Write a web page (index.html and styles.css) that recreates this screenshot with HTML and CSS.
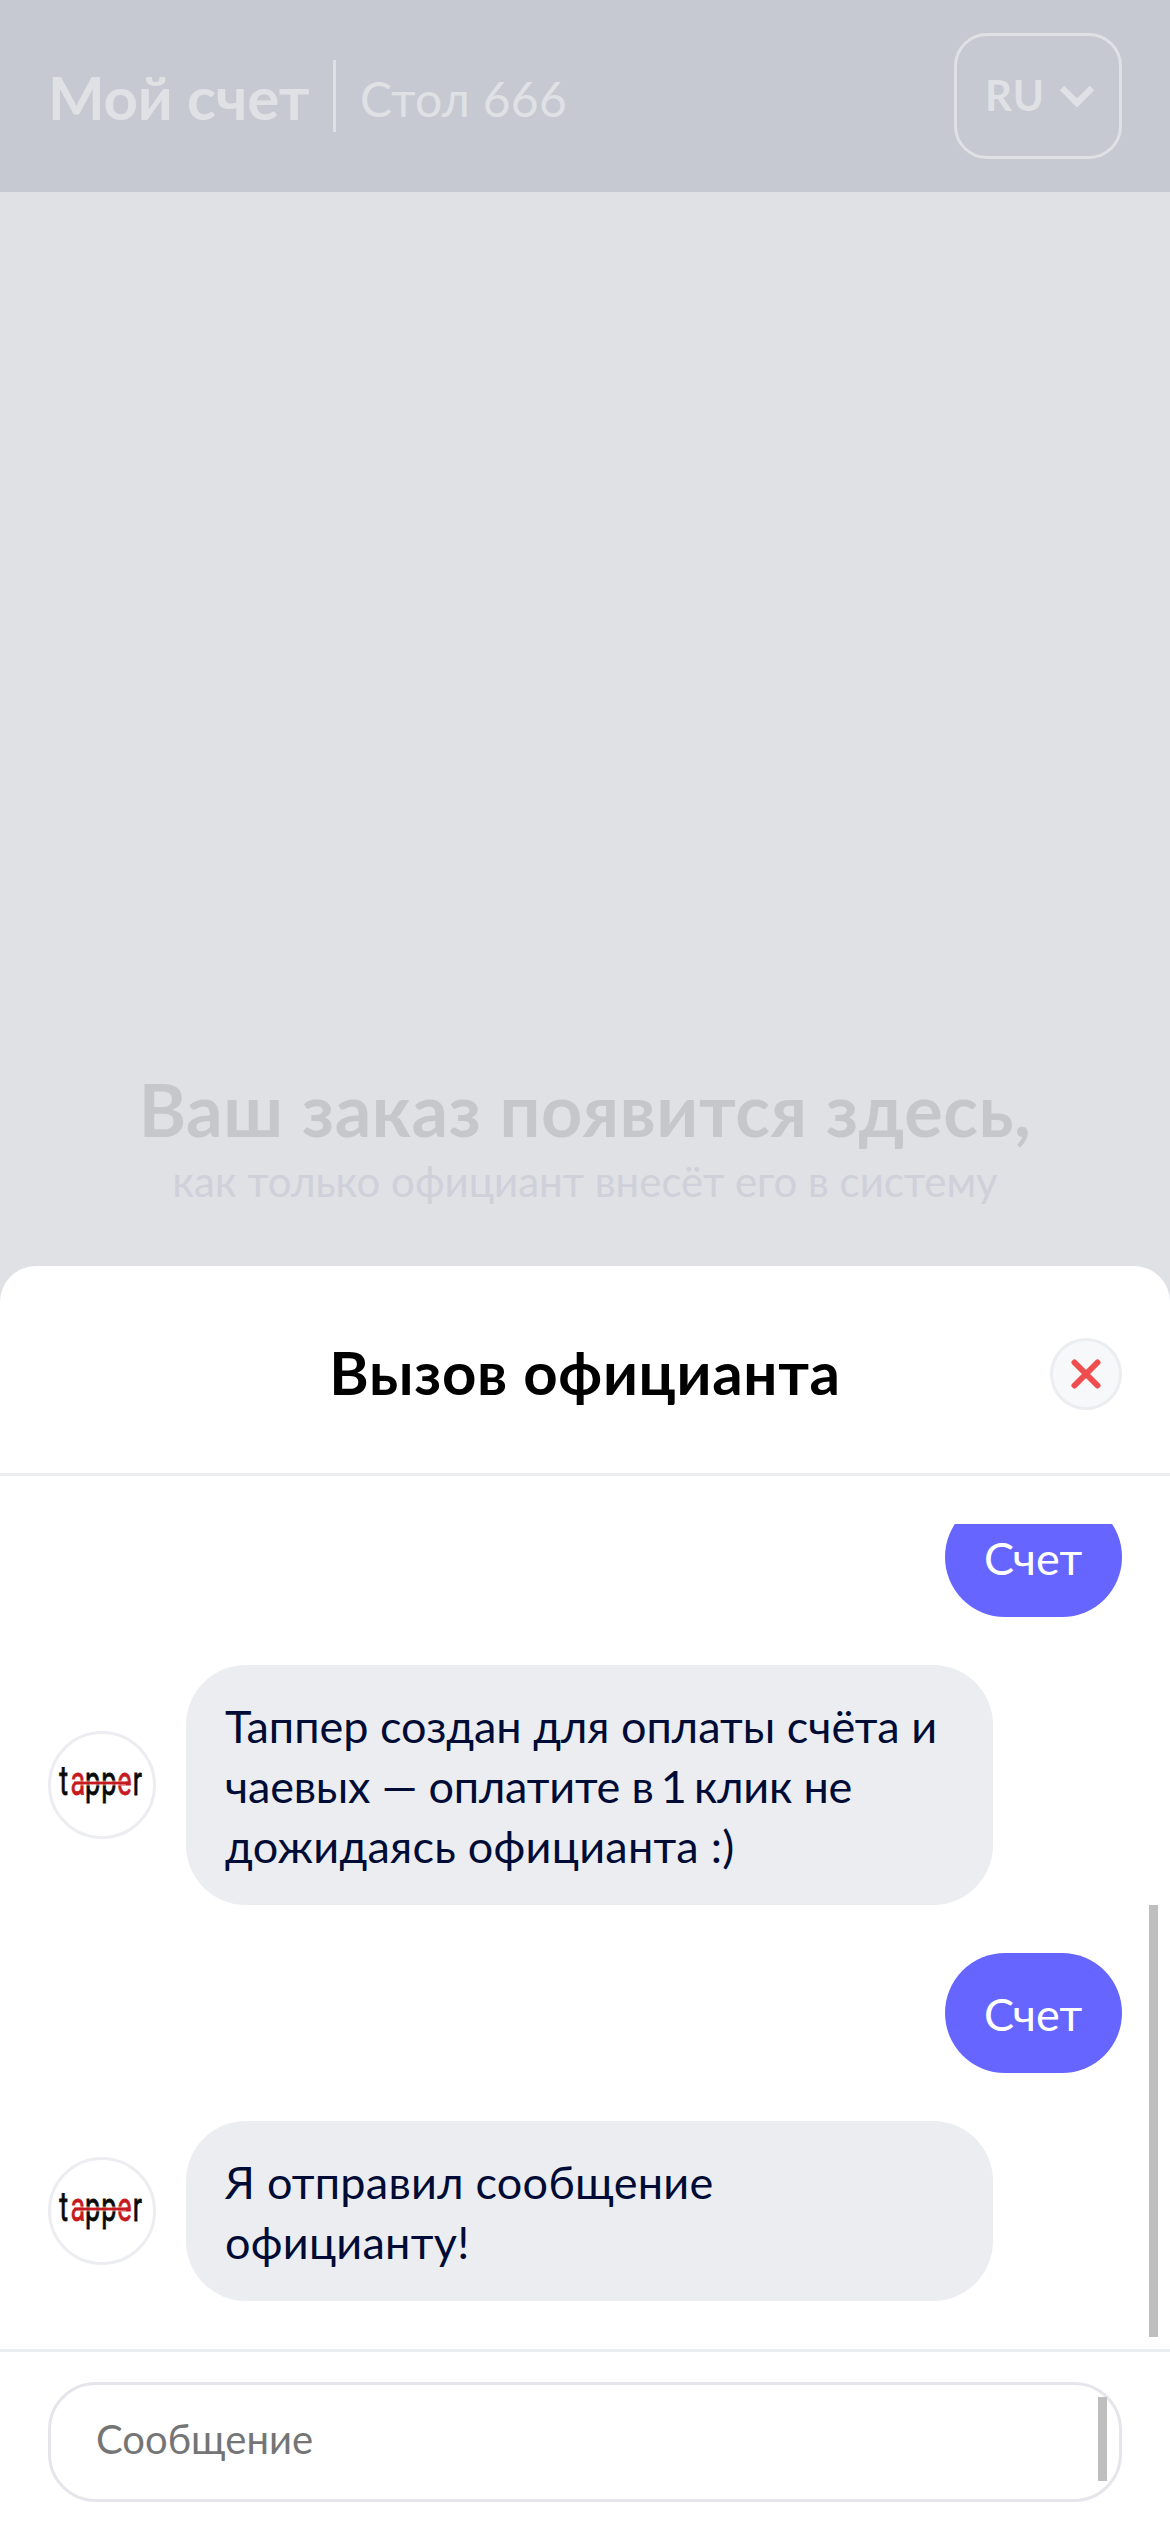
FILE: index.html
```
<!DOCTYPE html>
<html lang="ru">
<head>
<meta charset="utf-8">
<title>Мой счет</title>
<link rel="stylesheet" href="styles.css">
</head>
<body>
<svg class="defs" aria-hidden="true">
  <defs>
    <clipPath id="logo-clip"><rect x="0" y="0" width="102" height="66"/></clipPath>
    <symbol id="tapper" viewBox="0 0 102 102">
      <g clip-path="url(#logo-clip)">
        <text class="logo-text" transform="scale(.66 1)" y="61.5"><tspan x="12.5">t</tspan><tspan class="logo-red" x="29.5">a</tspan><tspan x="51.5">p</tspan><tspan x="76">p</tspan><tspan class="logo-red" x="100.5">e</tspan><tspan x="124">r</tspan></text>
      </g>
      <rect class="logo-halo" x="25" y="46.5" width="50" height="5"/>
      <rect class="logo-line" x="23" y="47.6" width="56" height="2.8"/>
    </symbol>
  </defs>
</svg>
<div class="app">
  <header class="topbar">
    <h1 class="topbar-title">Мой счет</h1>
    <span class="topbar-divider"></span>
    <span class="table-name">Стол 666</span>
    <button class="lang" type="button"><span class="lang-name">RU</span><svg class="chevron" viewBox="0 0 34 22"><path d="M2 3 17 18 32 3"/></svg></button>
  </header>
  <main class="empty">
    <p class="empty-title">Ваш заказ появится здесь,</p>
    <p class="empty-text">как только официант внесёт его в систему</p>
  </main>
  <section class="sheet">
    <header class="sheet-head">
      <h2 class="sheet-title">Вызов официанта</h2>
      <button class="close" type="button"><svg class="close-icon" viewBox="0 0 30 30"><path d="M3.5 3.5 26.5 26.5M26.5 3.5 3.5 26.5"/></svg></button>
    </header>
    <div class="chat">
      <div class="messages">
        <div class="bubble bubble-user">Счет</div>
        <div class="reply">
          <div class="avatar"><svg class="logo"><use href="#tapper"/></svg></div>
          <div class="bubble bubble-bot">Таппер создан для оплаты счёта и<br><span class="snug">чаевых — оплатите в <span class="digit">1</span> клик не</span><br><span class="loose">дожидаясь официанта :)</span></div>
        </div>
        <div class="bubble bubble-user">Счет</div>
        <div class="reply">
          <div class="avatar"><svg class="logo"><use href="#tapper"/></svg></div>
          <div class="bubble bubble-bot"><span class="loose">Я отправил сообщение<br>официанту!</span></div>
        </div>
      </div>
      <span class="thumb thumb-chat"></span>
    </div>
    <footer class="composer">
      <div class="field">
        <input class="field-input" type="text" placeholder="Сообщение">
        <span class="thumb thumb-field"></span>
      </div>
    </footer>
  </section>
</div>
</body>
</html>
```
FILE: styles.css
```
* { box-sizing: border-box; }

body {
  margin: 0;
  background: #dfe1e5;
  font-family: Lato, "Noto Sans", sans-serif;
}

h1, h2, p { margin: 0; }

button { font: inherit; padding: 0; background: none; }

.defs { display: none; }

.app {
  display: flex;
  flex-direction: column;
  height: 2532px;
  overflow: hidden;
}

/* Top bar */
.topbar {
  display: flex;
  align-items: center;
  flex: none;
  height: 192px;
  padding: 0 48px;
  background: #c6c9d2;
  color: #dfe1e5;
}

.topbar-title {
  width: 285px;
  padding-top: 2px;
  font-size: 60px;
  line-height: 72px;
  font-weight: 700;
  letter-spacing: -.2px;
  white-space: nowrap;
}

.topbar-divider {
  width: 3px;
  height: 72px;
  background: #dfe1e5;
}

.table-name {
  margin-left: 24px;
  padding-top: 5px;
  font-size: 48px;
  line-height: 60px;
  letter-spacing: .3px;
}

.lang {
  display: flex;
  align-items: center;
  width: 168px;
  height: 126px;
  margin-left: auto;
  padding: 0 25px 0 28px;
  border: 3px solid #dfe1e5;
  border-radius: 33px;
  color: #dfe1e5;
}

.lang-name {
  margin-top: -3px;
  font-size: 42px;
  line-height: 50px;
  font-weight: 700;
  letter-spacing: 1px;
}

.chevron {
  width: 34px;
  height: 22px;
  margin-left: auto;
  fill: none;
  stroke: #dfe1e5;
  stroke-width: 6.5;
}

/* Empty order */
.empty {
  display: flex;
  flex-direction: column;
  justify-content: flex-end;
  flex: none;
  height: 1074px;
  padding-bottom: 56px;
  text-align: center;
}

.empty-title {
  font-size: 72px;
  line-height: 86px;
  font-weight: 700;
  letter-spacing: .56px;
  color: #c6c7cb;
}

.empty-text {
  font-size: 42px;
  line-height: 58px;
  color: #cfd0d9;
}

/* Bottom sheet */
.sheet {
  display: flex;
  flex-direction: column;
  flex: 1;
  background: #fff;
  border-radius: 36px 36px 0 0;
}

.sheet-head {
  display: grid;
  grid-template-columns: 72px 1fr 72px;
  align-items: center;
  height: 210px;
  padding: 9px 48px 0;
  border-bottom: 3px solid #ecedf1;
}

.sheet-title {
  grid-column: 2;
  margin-top: -4px;
  font-size: 60px;
  line-height: 72px;
  font-weight: 700;
  letter-spacing: .7px;
  text-align: center;
  color: #000;
}

.close {
  display: grid;
  place-items: center;
  width: 72px;
  height: 72px;
  border: 3px solid #ecedf1;
  border-radius: 50%;
  background: #f7f8fa;
}

.close-icon {
  width: 30px;
  height: 30px;
  fill: none;
  stroke: #f04e4e;
  stroke-width: 6;
  stroke-linecap: round;
}

.chat {
  position: relative;
  height: 873px;
  padding: 48px 48px;
}

.messages {
  display: flex;
  flex-direction: column;
  justify-content: flex-end;
  gap: 48px;
  height: 777px;
  overflow: hidden;
}

.bubble {
  flex: none;
  padding: 31px 39px 29px;
  border-radius: 60px;
  font-size: 45px;
  line-height: 60px;
  white-space: nowrap;
}

.bubble-user {
  align-self: flex-end;
  width: 177px;
  background: #6765ff;
  color: #fff;
}

.reply {
  display: flex;
  align-items: center;
  gap: 30px;
}

.bubble-bot {
  width: 807px;
  background: #ecedf1;
  color: #000c35;
}

.snug { letter-spacing: -.2px; }

.digit { margin: 0 -4px; }

.loose { letter-spacing: .25px; }

.avatar {
  width: 108px;
  height: 108px;
  border: 3px solid #ecedf1;
  border-radius: 50%;
  background: #fff;
}

.logo {
  display: block;
  width: 102px;
  height: 102px;
}

.logo-text {
  font-family: Roboto, sans-serif;
  font-size: 41px;
  fill: #0a0a0a;
  stroke: #0a0a0a;
  stroke-width: .8;
}

.logo-red { fill: #c61a1f; stroke: #c61a1f; }

.logo-halo { fill: #fff; opacity: .55; }

.logo-line { fill: #c61a1f; }

.thumb {
  position: absolute;
  width: 9px;
  background: #bfbfbf;
}

.thumb-chat {
  right: 12px;
  bottom: 12px;
  height: 432px;
}

/* Message field */
.composer {
  flex: 1;
  padding: 30px 48px;
  border-top: 3px solid #ecedf1;
}

.field {
  position: relative;
  height: 120px;
  border: 3px solid #e5e5eb;
  border-radius: 48px;
}

.field-input {
  width: 100%;
  height: 114px;
  padding: 0 45px 6px;
  border: 0;
  background: none;
  font-family: inherit;
  font-size: 40px;
}

.field-input::placeholder { color: #757575; }

.thumb-field {
  right: 12px;
  top: 12px;
  height: 84px;
}
```
